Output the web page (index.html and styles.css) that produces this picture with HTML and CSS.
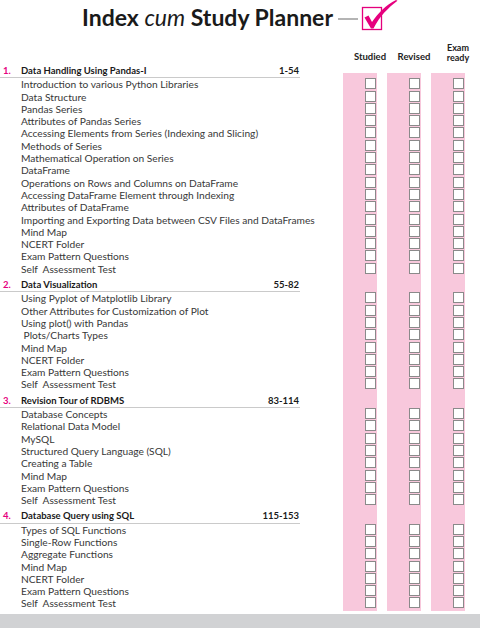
FILE: index.html
```html
<!DOCTYPE html>
<html lang="en">
<head>
    <meta charset="UTF-8">
    <meta name="viewport" content="width=device-width, initial-scale=1.0">
    <title>Index cum Study Planner</title>
    <link rel="stylesheet" href="styles.css">
</head>
<body>
    <header class="title-bar">
        <h1>Index <em>cum</em> Study Planner</h1>
        <svg class="title-mark" width="62" height="32" viewBox="0 0 62 32">
            <line x1="0" y1="19" x2="20" y2="19" stroke="#b4b4b4" stroke-width="2"/>
            <rect x="24.5" y="7.5" width="19" height="22" fill="none" stroke="#e4007c" stroke-width="1.3"/>
            <path d="M26.5 17.5 L30.5 15.5 L34 22 C40 13 48 5 58 0 L59.5 0.8 C50 8 42 16 35.5 28.5 L33 28.5 Z" fill="#e6007e"/>
        </svg>
    </header>

    <div class="col-heads">
        <span></span>
        <span class="col-head">Studied</span>
        <span class="col-head">Revised</span>
        <span class="col-head col-head-two">Exam<br>ready</span>
    </div>

    <div class="planner">
        <div class="unit-head">
            <div class="unit-label"><span class="unit-no">1.</span><span class="unit-name">Data Handling Using Pandas-I</span><span class="unit-pages">1-54</span></div>
        </div>
        <div class="topic"><span class="topic-name">Introduction to various Python Libraries</span><i class="tick"></i><i class="tick"></i><i class="tick"></i></div>
        <div class="topic"><span class="topic-name">Data Structure</span><i class="tick"></i><i class="tick"></i><i class="tick"></i></div>
        <div class="topic"><span class="topic-name">Pandas Series</span><i class="tick"></i><i class="tick"></i><i class="tick"></i></div>
        <div class="topic"><span class="topic-name">Attributes of Pandas Series</span><i class="tick"></i><i class="tick"></i><i class="tick"></i></div>
        <div class="topic"><span class="topic-name">Accessing Elements from Series (Indexing and Slicing)</span><i class="tick"></i><i class="tick"></i><i class="tick"></i></div>
        <div class="topic"><span class="topic-name">Methods of Series</span><i class="tick"></i><i class="tick"></i><i class="tick"></i></div>
        <div class="topic"><span class="topic-name">Mathematical Operation on Series</span><i class="tick"></i><i class="tick"></i><i class="tick"></i></div>
        <div class="topic"><span class="topic-name">DataFrame</span><i class="tick"></i><i class="tick"></i><i class="tick"></i></div>
        <div class="topic"><span class="topic-name">Operations on Rows and Columns on DataFrame</span><i class="tick"></i><i class="tick"></i><i class="tick"></i></div>
        <div class="topic"><span class="topic-name">Accessing DataFrame Element through Indexing</span><i class="tick"></i><i class="tick"></i><i class="tick"></i></div>
        <div class="topic"><span class="topic-name">Attributes of DataFrame</span><i class="tick"></i><i class="tick"></i><i class="tick"></i></div>
        <div class="topic"><span class="topic-name">Importing and Exporting Data between CSV Files and DataFrames</span><i class="tick"></i><i class="tick"></i><i class="tick"></i></div>
        <div class="topic"><span class="topic-name">Mind Map</span><i class="tick"></i><i class="tick"></i><i class="tick"></i></div>
        <div class="topic"><span class="topic-name">NCERT Folder</span><i class="tick"></i><i class="tick"></i><i class="tick"></i></div>
        <div class="topic"><span class="topic-name">Exam Pattern Questions</span><i class="tick"></i><i class="tick"></i><i class="tick"></i></div>
        <div class="topic"><span class="topic-name">Self&nbsp; Assessment Test</span><i class="tick"></i><i class="tick"></i><i class="tick"></i></div>

        <div class="unit-head">
            <div class="unit-label"><span class="unit-no">2.</span><span class="unit-name">Data Visualization</span><span class="unit-pages">55-82</span></div>
        </div>
        <div class="topic"><span class="topic-name">Using Pyplot of Matplotlib Library</span><i class="tick"></i><i class="tick"></i><i class="tick"></i></div>
        <div class="topic"><span class="topic-name">Other Attributes for Customization of Plot</span><i class="tick"></i><i class="tick"></i><i class="tick"></i></div>
        <div class="topic"><span class="topic-name">Using plot() with Pandas</span><i class="tick"></i><i class="tick"></i><i class="tick"></i></div>
        <div class="topic"><span class="topic-name">&nbsp;Plots/Charts Types</span><i class="tick"></i><i class="tick"></i><i class="tick"></i></div>
        <div class="topic"><span class="topic-name">Mind Map</span><i class="tick"></i><i class="tick"></i><i class="tick"></i></div>
        <div class="topic"><span class="topic-name">NCERT Folder</span><i class="tick"></i><i class="tick"></i><i class="tick"></i></div>
        <div class="topic"><span class="topic-name">Exam Pattern Questions</span><i class="tick"></i><i class="tick"></i><i class="tick"></i></div>
        <div class="topic"><span class="topic-name">Self&nbsp; Assessment Test</span><i class="tick"></i><i class="tick"></i><i class="tick"></i></div>

        <div class="unit-head">
            <div class="unit-label"><span class="unit-no">3.</span><span class="unit-name">Revision Tour of RDBMS</span><span class="unit-pages">83-114</span></div>
        </div>
        <div class="topic"><span class="topic-name">Database Concepts</span><i class="tick"></i><i class="tick"></i><i class="tick"></i></div>
        <div class="topic"><span class="topic-name">Relational Data Model</span><i class="tick"></i><i class="tick"></i><i class="tick"></i></div>
        <div class="topic"><span class="topic-name">MySQL</span><i class="tick"></i><i class="tick"></i><i class="tick"></i></div>
        <div class="topic"><span class="topic-name">Structured Query Language (SQL)</span><i class="tick"></i><i class="tick"></i><i class="tick"></i></div>
        <div class="topic"><span class="topic-name">Creating a Table</span><i class="tick"></i><i class="tick"></i><i class="tick"></i></div>
        <div class="topic"><span class="topic-name">Mind Map</span><i class="tick"></i><i class="tick"></i><i class="tick"></i></div>
        <div class="topic"><span class="topic-name">Exam Pattern Questions</span><i class="tick"></i><i class="tick"></i><i class="tick"></i></div>
        <div class="topic"><span class="topic-name">Self&nbsp; Assessment Test</span><i class="tick"></i><i class="tick"></i><i class="tick"></i></div>

        <div class="unit-head">
            <div class="unit-label"><span class="unit-no">4.</span><span class="unit-name">Database Query using SQL</span><span class="unit-pages">115-153</span></div>
        </div>
        <div class="topic"><span class="topic-name">Types of SQL Functions</span><i class="tick"></i><i class="tick"></i><i class="tick"></i></div>
        <div class="topic"><span class="topic-name">Single-Row Functions</span><i class="tick"></i><i class="tick"></i><i class="tick"></i></div>
        <div class="topic"><span class="topic-name">Aggregate Functions</span><i class="tick"></i><i class="tick"></i><i class="tick"></i></div>
        <div class="topic"><span class="topic-name">Mind Map</span><i class="tick"></i><i class="tick"></i><i class="tick"></i></div>
        <div class="topic"><span class="topic-name">NCERT Folder</span><i class="tick"></i><i class="tick"></i><i class="tick"></i></div>
        <div class="topic"><span class="topic-name">Exam Pattern Questions</span><i class="tick"></i><i class="tick"></i><i class="tick"></i></div>
        <div class="topic"><span class="topic-name">Self&nbsp; Assessment Test</span><i class="tick"></i><i class="tick"></i><i class="tick"></i></div>
    </div>

    <footer class="page-foot"></footer>
</body>
</html>
```

FILE: styles.css
```css
body {
    font-family: 'Lato', 'Liberation Sans', sans-serif;
    margin: 0;
    padding: 0;
    background: #fff;
    color: #333;
}
.title-bar {
    display: flex;
    justify-content: center;
    align-items: flex-start;
    height: 36px;
    padding-left: 2px;
}
.title-bar h1 {
    margin: 0;
    padding-top: 2px;
    font-size: 23px;
    line-height: 30px;
    font-weight: 700;
    color: #1a1a1a;
}
.title-bar h1 em {
    font-weight: 400;
}
.title-mark {
    margin-left: 5px;
}
.col-heads,
.topic {
    display: grid;
    grid-template-columns: 343px 34px 34px 34px;
    column-gap: 10px;
}
.col-heads {
    height: 25px;
    align-items: end;
}
.col-head {
    text-align: center;
    font-size: 9.5px;
    line-height: 9px;
    font-weight: 700;
    color: #222;
}
.col-head-two {
    font-size: 9px;
    line-height: 10.5px;
    margin-bottom: -2.5px;
}
.planner {
    padding-bottom: 1px;
    background: linear-gradient(to right,
        transparent 343px, #f8c8dc 343px, #f8c8dc 377px,
        transparent 377px, transparent 387px, #f8c8dc 387px, #f8c8dc 421px,
        transparent 421px, transparent 431px, #f8c8dc 431px, #f8c8dc 465px,
        transparent 465px) 0 12px / 100% calc(100% - 12px) no-repeat;
}
.unit-head {
    padding-top: 3.8px;
}
.unit-label {
    display: flex;
    width: 300px;
    font-size: 9.5px;
    line-height: 12.4px;
    font-weight: 700;
    color: #1a1a1a;
    padding-bottom: 0.1px;
    border-bottom: 1.5px solid #cacaca;
}
.unit-no {
    width: 21px;
    padding-left: 3px;
    box-sizing: border-box;
    color: #e6007e;
}
.unit-name {
    flex: 1;
}
.unit-pages {
    padding-right: 1px;
}
.topic {
    height: 12.3px;
}
.topic-name {
    padding-left: 21px;
    font-size: 10.2px;
    line-height: 12.3px;
    color: #383838;
    white-space: nowrap;
}
.tick {
    justify-self: center;
    width: 11px;
    height: 11px;
    box-sizing: border-box;
    border: 1px solid #8a8a8a;
    background: #fff;
}
.page-foot {
    margin-top: 3px;
    height: 14px;
    background: #d1d2d4;
}
```
